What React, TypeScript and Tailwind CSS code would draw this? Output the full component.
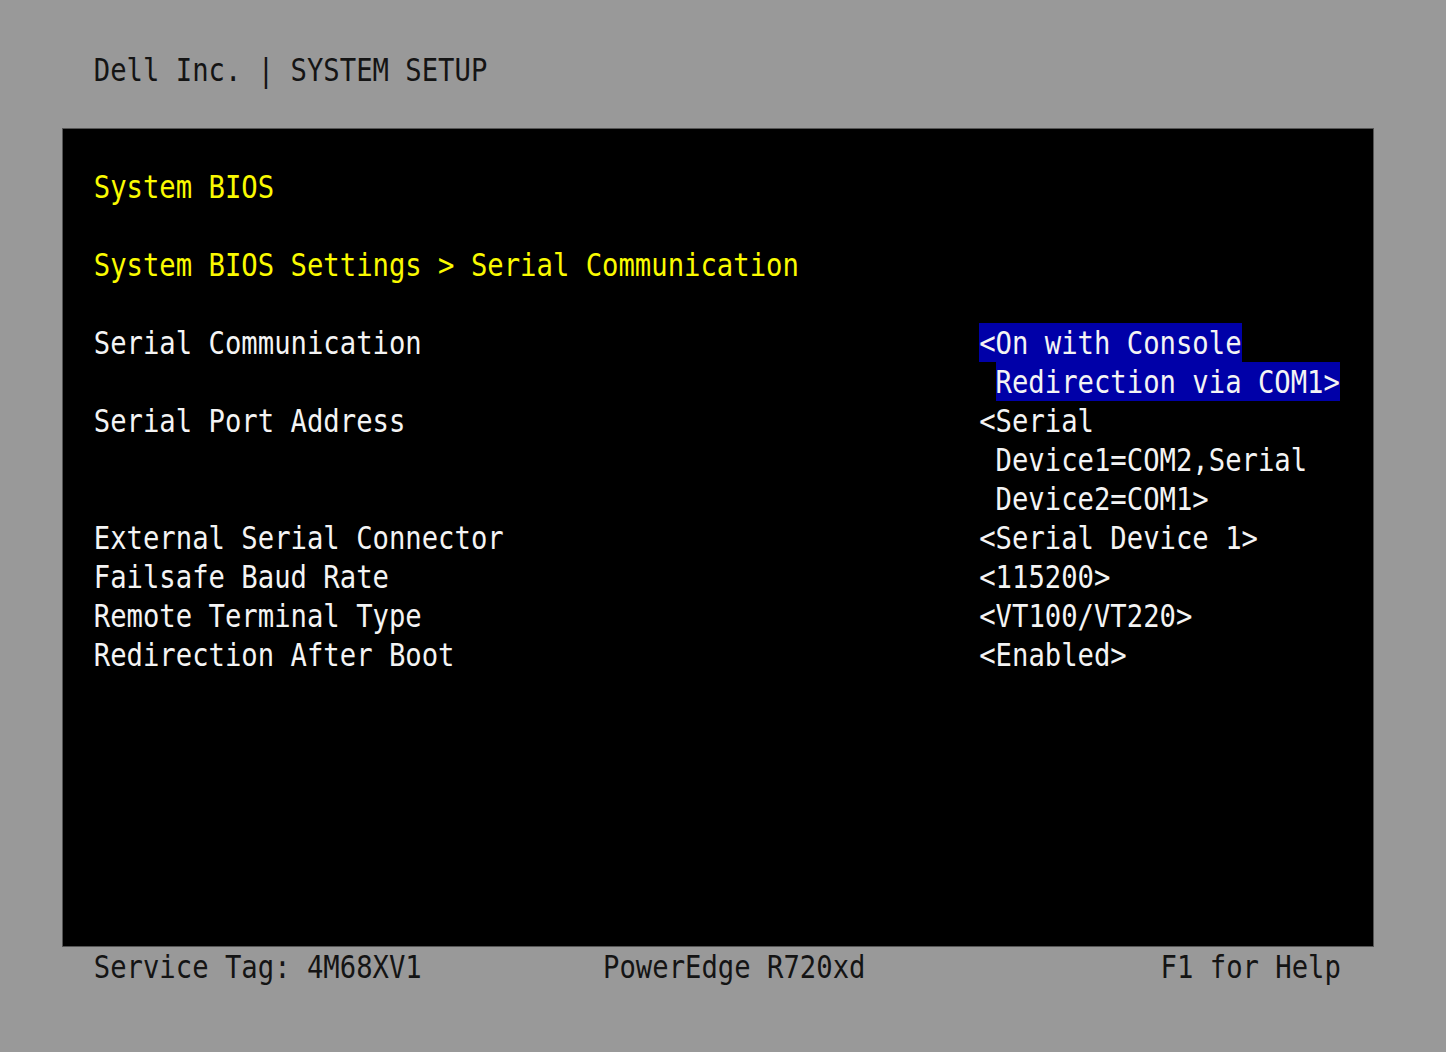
import React from "react";

const FONT = { fontFamily: '"DejaVu Sans Mono", "Liberation Mono", monospace' };

function T({ children, className = "" }: { children: React.ReactNode; className?: string }) {
  return <span className={`inline-block origin-center scale-y-[1.2] ${className}`}>{children}</span>;
}

function Row({ children, className = "" }: { children?: React.ReactNode; className?: string }) {
  return <div className={`h-[39px] leading-[39px] whitespace-pre ${className}`}>{children}</div>;
}

type Setting = { label: string; value: string[]; selected?: boolean };

const settings: Setting[] = [
  { label: "Serial Communication", value: ["<On with Console", "Redirection via COM1>"], selected: true },
  { label: "Serial Port Address", value: ["<Serial", "Device1=COM2,Serial", "Device2=COM1>"] },
  { label: "External Serial Connector", value: ["<Serial Device 1>"] },
  { label: "Failsafe Baud Rate", value: ["<115200>"] },
  { label: "Remote Terminal Type", value: ["<VT100/VT220>"] },
  { label: "Redirection After Boot", value: ["<Enabled>"] },
];

export default function App() {
  return (
    <div className="w-[1446px] h-[1052px] bg-[#999999] pt-[50px] overflow-hidden text-[27.24px]" style={FONT}>
      <div className="ml-[62px] mr-[72px]">
        <Row className="pl-[calc(2ch-1px)] text-[#141414]">
          <T>Dell Inc. | SYSTEM SETUP</T>
        </Row>
        <Row />
        <div className="h-[819px] bg-black border border-[#555555] flex flex-col text-[#f4f4f4]">
          <Row className="-mt-px" />
          <Row className="pl-[calc(2ch-2px)] text-[#fafa00]">
            <T>System BIOS</T>
          </Row>
          <Row />
          <Row className="pl-[calc(2ch-2px)] text-[#fafa00]">
            <T>System BIOS Settings &gt; Serial Communication</T>
          </Row>
          <Row />
          {settings.map((s) => (
            <div key={s.label} className="flex pl-[calc(2ch-2px)]">
              <Row className="w-[54ch]">
                <T>{s.label}</T>
              </Row>
              <div className="flex flex-col">
                {s.value.map((v, i) => (
                  <Row key={i} className={i > 0 ? "pl-[1ch]" : ""}>
                    <span className={`inline-block h-[39px] ${s.selected ? "bg-[#0000a8]" : ""}`}>
                      <T>{v}</T>
                    </span>
                  </Row>
                ))}
              </div>
            </div>
          ))}
        </div>
        <Row className="flex text-[#141414]">
          <div className="w-[33ch] pl-[calc(2ch-1px)]">
            <T>Service Tag: 4M68XV1</T>
          </div>
          <div className="w-[34ch]">
            <T>PowerEdge R720xd</T>
          </div>
          <div>
            <T>F1 for Help</T>
          </div>
        </Row>
      </div>
    </div>
  );
}
